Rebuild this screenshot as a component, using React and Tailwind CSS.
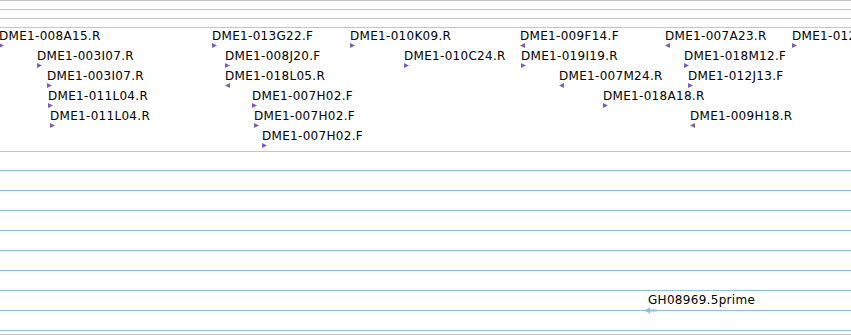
import React from 'react';

// clone features placed along the track: x in px, row index, strand
const clones = [
  { x: -2, row: 0, name: 'DME1-008A15.R', dir: 'r' },
  { x: 36, row: 1, name: 'DME1-003I07.R', dir: 'r' },
  { x: 46, row: 2, name: 'DME1-003I07.R', dir: 'r' },
  { x: 47, row: 3, name: 'DME1-011L04.R', dir: 'r' },
  { x: 49, row: 4, name: 'DME1-011L04.R', dir: 'r' },
  { x: 211, row: 0, name: 'DME1-013G22.F', dir: 'r' },
  { x: 224, row: 1, name: 'DME1-008J20.F', dir: 'r' },
  { x: 224, row: 2, name: 'DME1-018L05.R', dir: 'l' },
  { x: 251, row: 3, name: 'DME1-007H02.F', dir: 'r' },
  { x: 253, row: 4, name: 'DME1-007H02.F', dir: 'r' },
  { x: 261, row: 5, name: 'DME1-007H02.F', dir: 'r' },
  { x: 349, row: 0, name: 'DME1-010K09.R', dir: 'r' },
  { x: 403, row: 1, name: 'DME1-010C24.R', dir: 'r' },
  { x: 519, row: 0, name: 'DME1-009F14.F', dir: 'l' },
  { x: 520, row: 1, name: 'DME1-019I19.R', dir: 'r' },
  { x: 558, row: 2, name: 'DME1-007M24.R', dir: 'l' },
  { x: 602, row: 3, name: 'DME1-018A18.R', dir: 'r' },
  { x: 664, row: 0, name: 'DME1-007A23.R', dir: 'l' },
  { x: 683, row: 1, name: 'DME1-018M12.F', dir: 'r' },
  { x: 687, row: 2, name: 'DME1-012J13.F', dir: 'r' },
  { x: 689, row: 4, name: 'DME1-009H18.R', dir: 'l' },
  { x: 791, row: 0, name: 'DME1-012K14.R', dir: 'r' },
];

const Arrow = ({ dir }) => (
  <svg width="6" height="5" viewBox="0 0 6 5" className="ml-[1px] block">
    <polygon points={dir === 'r' ? '0,0 5,2.5 0,5' : '5,0 0,2.5 5,5'} fill="#7b5cbf" />
  </svg>
);

const Clone = ({ x, row, name, dir }) => (
  <div className="absolute flex flex-col" style={{ left: x, top: 29 + row * 20 }}>
    <span className="ml-[1px] h-[14px] leading-[14px] text-[12px] tracking-[0.3px] text-black whitespace-nowrap">{name}</span>
    <Arrow dir={dir} />
  </div>
);

function App() {
  return (
    <div
      className="relative w-[851px] h-[335px] overflow-hidden bg-white"
      style={{ fontFamily: '"DejaVu Sans", Verdana, sans-serif' }}
    >
      {/* ruler / scale lines */}
      <div className="h-[9px] border-t border-[#c4c4c4]" />
      <div className="h-[9px] border-t border-[#c4c4c4]" />
      <div className="h-[9px] border-t border-[#c4c4c4]" />
      {/* clone track */}
      <div className="h-[124px] border-t border-[#c4c4c4]" />
      {/* EST track */}
      <div className="h-[19px] border-t border-[#c4c4c4]" />
      {[0, 1, 2, 3, 4, 5, 6, 7].map((i) => (
        <div key={i} className="h-[20px] border-t border-[#8cbfe6]" />
      ))}
      <div className="h-[4px] border-t border-[#8cbfe6]" />
      <div className="h-[1px] border-t border-[#c4c4c4]" />

      {clones.map((c, i) => (
        <Clone key={i} {...c} />
      ))}

      {/* GH08969 5' EST */}
      <div className="absolute left-[648px] top-[293px] h-[14px] leading-[14px] text-[12px] tracking-[0.3px] text-black whitespace-nowrap">
        GH08969.5prime
      </div>
      <svg width="14" height="7" viewBox="0 0 14 7" className="absolute left-[644px] top-[307px]">
        <polygon points="0,3.5 6,0.5 6,6.5" fill="#8cbfe6" />
        <rect x="5" y="2.5" width="8" height="2" fill="#8cbfe6" />
      </svg>
    </div>
  );
}

export default App;
